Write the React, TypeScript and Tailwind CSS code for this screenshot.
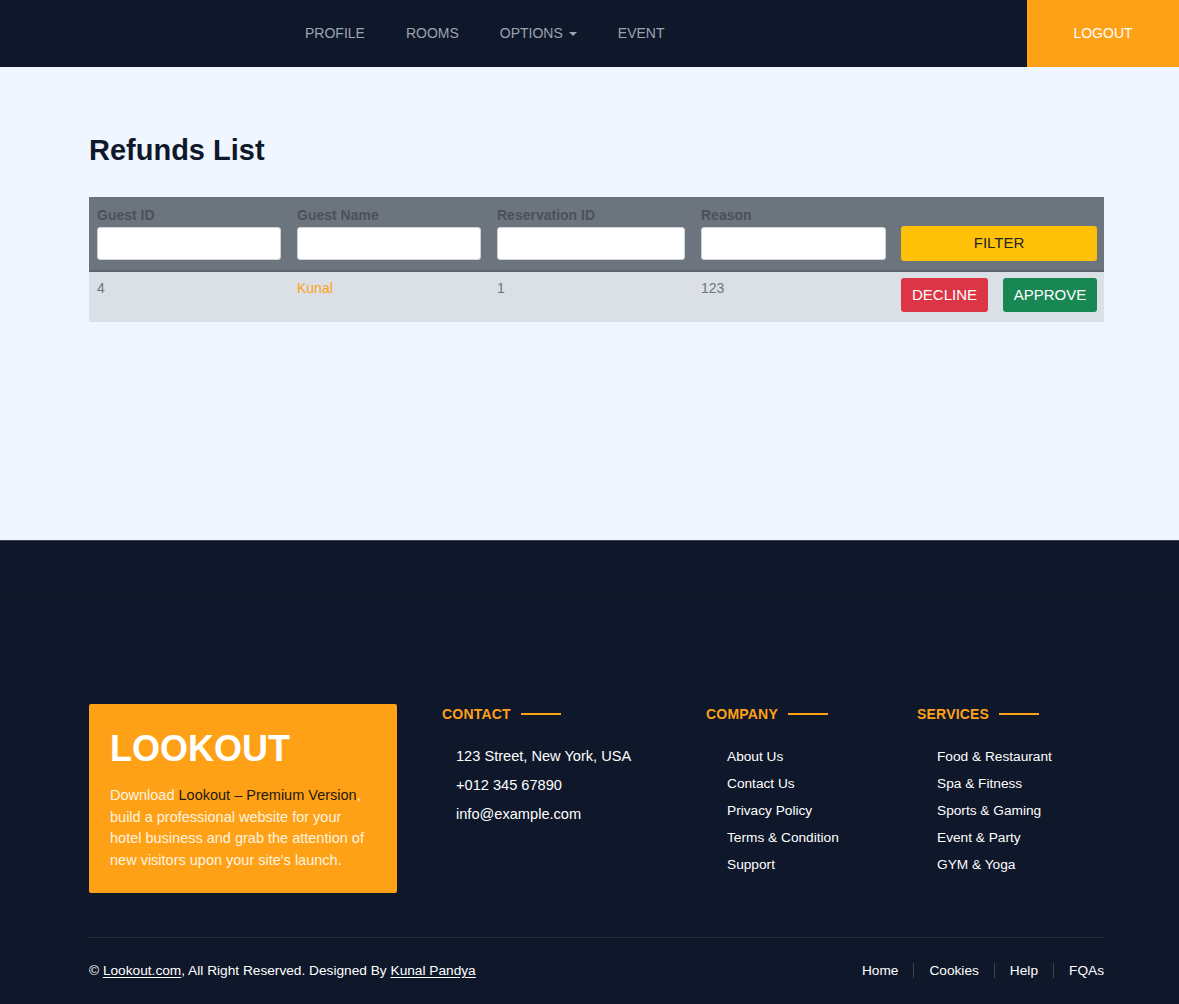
import React from "react";

const navLinks = ["PROFILE", "ROOMS", "OPTIONS", "EVENT"];
const contact = ["123 Street, New York, USA", "+012 345 67890", "info@example.com"];
const company = ["About Us", "Contact Us", "Privacy Policy", "Terms & Condition", "Support"];
const services = ["Food & Restaurant", "Spa & Fitness", "Sports & Gaming", "Event & Party", "GYM & Yoga"];
const bottomLinks = ["Home", "Cookies", "Help", "FQAs"];

function FooterHeading({ title }: { title: string }) {
  return (
    <div className="flex items-center gap-[10px] h-[20px]">
      <span className="text-[14px] font-bold text-[#fea116] tracking-[0.2px]">{title}</span>
      <span className="w-[40px] h-[2px] bg-[#fea116]" />
    </div>
  );
}

export default function App() {
  return (
    <main className="min-h-screen bg-[#0f172a] font-['Liberation_Sans',Arial,sans-serif]">
      {/* Navbar */}
      <nav className="h-[67px] bg-[#0f172a] flex items-center">
        <div className="flex items-center ml-[305px] gap-[41px] text-[14px] text-[#9ca3af]">
          {navLinks.map((l) => (
            <span key={l} className="flex items-center">
              {l}
              {l === "OPTIONS" && (
                <span className="ml-[6px] border-x-[4px] border-x-transparent border-t-[4px] border-t-[#9ca3af] mt-[1px]" />
              )}
            </span>
          ))}
        </div>
        <div className="ml-auto h-full w-[152px] bg-[#fea116] flex items-center justify-center text-[14px] text-white">
          LOGOUT
        </div>
      </nav>

      {/* Content */}
      <section className="bg-[#eff6ff] h-[473px] pt-[66px]">
        <div className="ml-[89px] w-[1015px]">
          <h1 className="text-[29px] font-bold text-[#0f172a] leading-[34px]">Refunds List</h1>

          <div className="mt-[30px]">
            <div className="bg-[#6c757d] grid grid-cols-[200px_200px_204px_201px_210px] pt-[8px] pb-[9px] border-b-[2px] border-[#5c636a]">
              {["Guest ID", "Guest Name", "Reservation ID", "Reason"].map((h) => (
                <div key={h} className="px-[8px]">
                  <div className="text-[14px] font-bold text-[#4b5157] leading-[20px]">{h}</div>
                  <div className="mt-[2px] h-[33px] bg-white rounded-[3px] border border-[#ced4da]" />
                </div>
              ))}
              <div className="px-[7px] pt-[21px]">
                <button className="w-full h-[35px] bg-[#ffc107] rounded-[3px] text-[15px] text-[#212529]">FILTER</button>
              </div>
            </div>
            <div className="bg-[#dbe0e7] grid grid-cols-[200px_200px_204px_201px_210px] h-[50px] text-[14px] text-[#6c757d]">
              <div className="px-[8px] pt-[6px]">4</div>
              <div className="px-[8px] pt-[6px] text-[#fea116]">Kunal</div>
              <div className="px-[8px] pt-[6px]">1</div>
              <div className="px-[8px] pt-[6px]">123</div>
              <div className="px-[7px] pt-[6px] flex gap-[15px]">
                <button className="h-[34px] w-[87px] bg-[#dc3545] rounded-[3px] text-[15px] text-white">DECLINE</button>
                <button className="h-[34px] w-[94px] bg-[#198754] rounded-[3px] text-[15px] text-white">APPROVE</button>
              </div>
            </div>
          </div>
        </div>
      </section>

      {/* Footer */}
      <footer className="border-t border-[#3b4252]">
        <div className="h-[56px] border-b border-[#0c1324]" />
        <div className="ml-[89px] w-[1015px] pt-[107px]">
          <div className="flex">
            <div className="w-[308px] h-[189px] bg-[#fea116] rounded-[2px] px-[21px] pt-[24px]">
              <h2 className="text-[36px] font-bold text-white leading-[42px]">LOOKOUT</h2>
              <p className="mt-[15px] text-[14.5px] leading-[21.5px] text-[#fff4e0]">
                Download <span className="text-[#1f1a10]">Lookout – Premium Version</span>, build a professional website for your hotel business and grab the attention of new visitors upon your site's launch.
              </p>
            </div>
            <div className="ml-[45px] w-[264px]">
              <FooterHeading title="CONTACT" />
              <ul className="mt-[23px] pl-[14px] text-[14.6px] text-white space-y-[10px]">
                {contact.map((c) => (
                  <li key={c} className="leading-[19px]">{c}</li>
                ))}
              </ul>
            </div>
            <div className="w-[211px]">
              <FooterHeading title="COMPANY" />
              <ul className="mt-[24px] pl-[21px] text-[13.7px] text-white space-y-[10px]">
                {company.map((c) => (
                  <li key={c} className="leading-[17px]">{c}</li>
                ))}
              </ul>
            </div>
            <div className="flex-1">
              <FooterHeading title="SERVICES" />
              <ul className="mt-[24px] pl-[20px] text-[13.7px] text-white space-y-[10px]">
                {services.map((c) => (
                  <li key={c} className="leading-[17px]">{c}</li>
                ))}
              </ul>
            </div>
          </div>

          <div className="mt-[44px] border-t border-[#242c3d] h-[66px] flex items-center text-[13.7px] text-white pt-[1px]">
            <p>
              © <span className="underline underline-offset-2">Lookout.com</span>, All Right Reserved. Designed By{" "}
              <span className="underline underline-offset-2">Kunal Pandya</span>
            </p>
            <div className="ml-auto flex items-center">
              {bottomLinks.map((l, i) => (
                <span key={l} className="flex items-center">
                  {i > 0 && <span className="mx-[15px] h-[15px] w-px bg-[#3b4252]" />}
                  {l}
                </span>
              ))}
            </div>
          </div>
        </div>
      </footer>
    </main>
  );
}
